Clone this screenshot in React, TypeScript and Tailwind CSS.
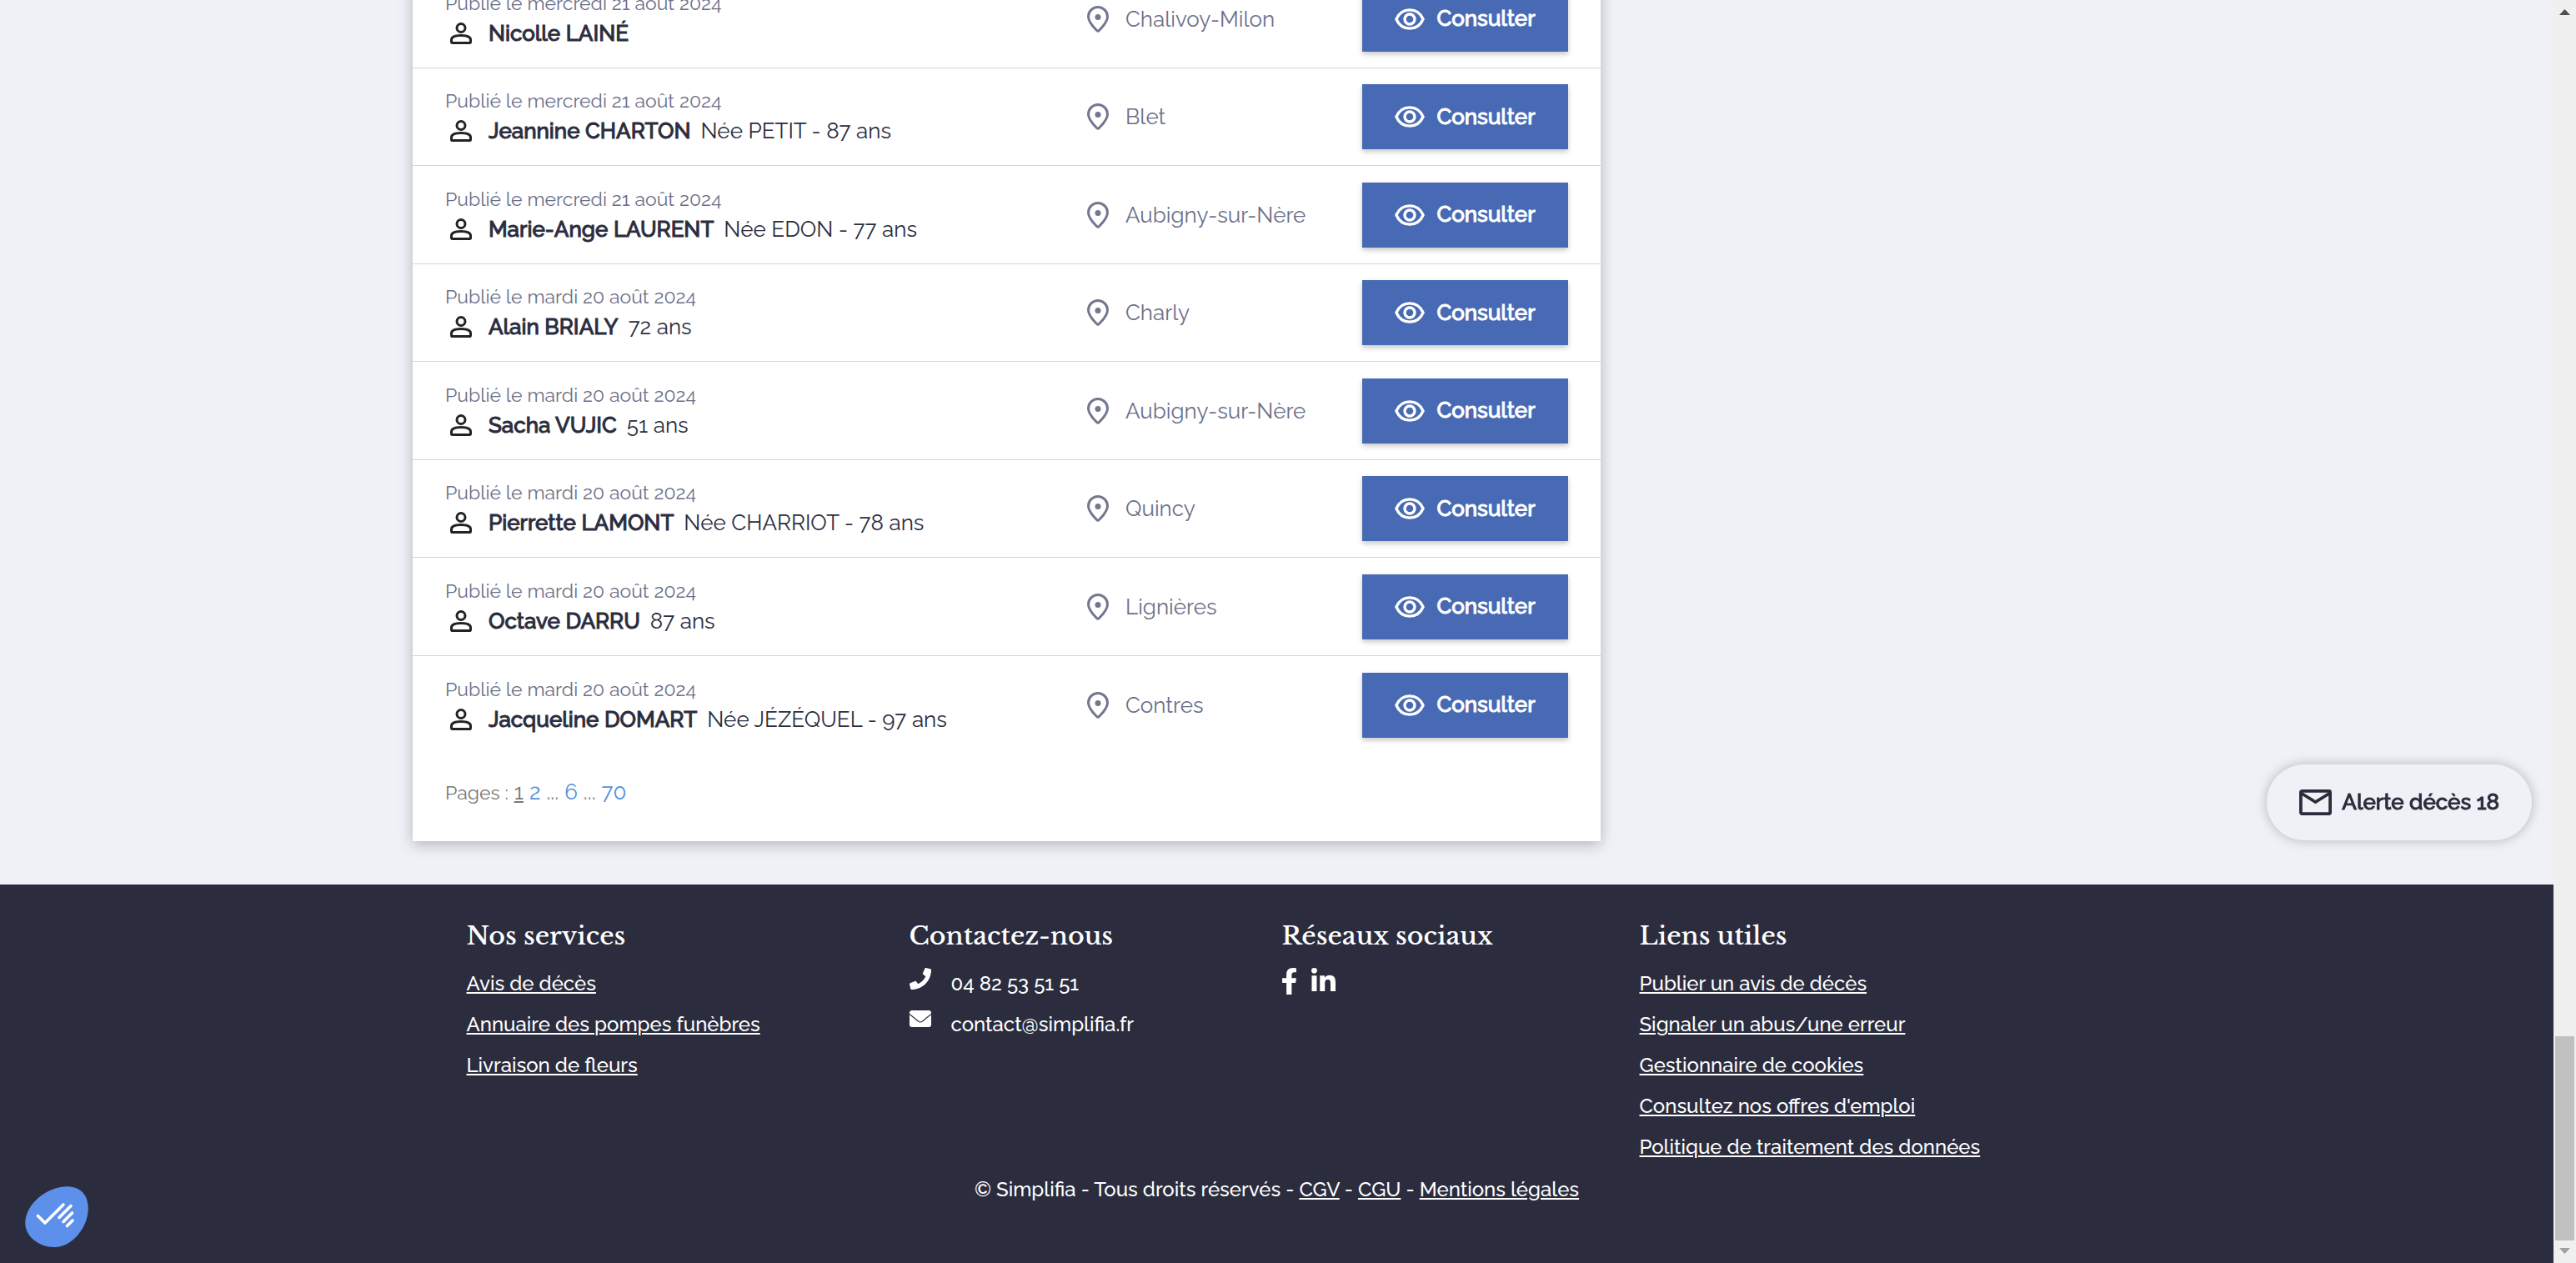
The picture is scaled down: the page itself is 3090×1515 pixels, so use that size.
import type { ReactNode } from 'react';

type Notice = { date: string; name: string; detail?: string; city: string };

const notices: Notice[] = [
  { date: 'mercredi 21 août 2024', name: 'Nicolle LAINÉ', city: 'Chalivoy-Milon' },
  { date: 'mercredi 21 août 2024', name: 'Jeannine CHARTON', detail: 'Née PETIT - 87 ans', city: 'Blet' },
  { date: 'mercredi 21 août 2024', name: 'Marie-Ange LAURENT', detail: 'Née EDON - 77 ans', city: 'Aubigny-sur-Nère' },
  { date: 'mardi 20 août 2024', name: 'Alain BRIALY', detail: '72 ans', city: 'Charly' },
  { date: 'mardi 20 août 2024', name: 'Sacha VUJIC', detail: '51 ans', city: 'Aubigny-sur-Nère' },
  { date: 'mardi 20 août 2024', name: 'Pierrette LAMONT', detail: 'Née CHARRIOT - 78 ans', city: 'Quincy' },
  { date: 'mardi 20 août 2024', name: 'Octave DARRU', detail: '87 ans', city: 'Lignières' },
  { date: 'mardi 20 août 2024', name: 'Jacqueline DOMART', detail: 'Née JÉZÉQUEL - 97 ans', city: 'Contres' },
];

const services = ['Avis de décès', 'Annuaire des pompes funèbres', 'Livraison de fleurs'];
const usefulLinks = [
  'Publier un avis de décès',
  'Signaler un abus/une erreur',
  'Gestionnaire de cookies',
  "Consultez nos offres d'emploi",
  'Politique de traitement des données',
];

function PersonIcon() {
  return (
    <svg className="ml-1.5 h-[26px] w-[26px] shrink-0" viewBox="0 0 26 26" fill="none" stroke="#232323" strokeWidth="3" aria-hidden="true">
      <circle cx="13" cy="6.5" r="5" />
      <path d="M1.500 23.200v-2.400c0-3.600 5.200-5.300 11.500-5.300s11.500 1.700 11.500 5.300v2.400a1.300 1.300 0 0 1-1.300 1.300H2.800a1.300 1.300 0 0 1-1.300-1.300z" />
    </svg>
  );
}

function PinIcon() {
  return (
    <svg className="h-8 w-[26px] shrink-0" viewBox="0 0 26 32" fill="none" aria-hidden="true">
      <path d="M13 1.500C6.600 1.500 1.500 6.600 1.500 13c0 7 6.500 12.600 10.400 16.800.6.700 1.600.7 2.200 0C18 25.600 24.500 20 24.500 13 24.500 6.600 19.400 1.500 13 1.500z" stroke="#73778f" strokeWidth="3" />
      <circle cx="13" cy="13.500" r="3.500" fill="#73778f" />
    </svg>
  );
}

function EyeIcon() {
  return (
    <svg className="h-[26px] w-9 shrink-0" viewBox="0 0 36 26" fill="none" stroke="currentColor" strokeWidth="3.400" aria-hidden="true">
      <path d="M1.900 13C5 6 11 1.900 18 1.900S31 6 34.100 13C31 20 25 24.100 18 24.100S5 20 1.900 13z" strokeLinejoin="round" />
      <circle cx="18" cy="13" r="6" />
    </svg>
  );
}

function Row({ notice }: { notice: Notice }) {
  return (
    <li className="flex items-center border-b border-[#d3d5df] px-[39px] last:border-b-0">
      <div className="min-w-0 flex-1 pb-0.5">
        <p className="text-[23px] leading-9 text-[#6c7089]">Publié le {notice.date}</p>
        <p className="flex items-center text-[26px] leading-9 text-[#2b2d3e]">
          <PersonIcon />
          <strong className="ml-5 font-medium [-webkit-text-stroke:1px_currentColor]">{notice.name}</strong>
          {notice.detail && <span className="ml-3">{notice.detail}</span>}
        </p>
      </div>
      <p className="flex w-[330px] items-center gap-5 text-[26px] leading-9 text-[#6c7089]">
        <PinIcon />
        {notice.city}
      </p>
      <button type="button" className="flex h-[78px] w-[247px] items-center justify-center gap-3.5 bg-[#4869b3] text-[26px] font-medium text-white shadow-[0_3px_6px_rgba(0,0,0,0.22)] [-webkit-text-stroke:1px_currentColor]">
        <EyeIcon />
        Consulter
      </button>
    </li>
  );
}

function FooterLink({ children }: { children: ReactNode }) {
  return (
    <a href="#" className="underline decoration-2 underline-offset-2">
      {children}
    </a>
  );
}

function FooterColumn({ title, children }: { title: string; children: ReactNode }) {
  return (
    <section>
      <h2 className="font-['Libre_Baskerville','Liberation_Serif',serif] text-[30px] leading-10 font-medium">{title}</h2>
      {children}
    </section>
  );
}

function Footer() {
  return (
    <footer className="flex-1 bg-[#2b2d3e] text-[24px] font-medium text-white">
      <div className="mx-auto grid max-w-[1944px] grid-cols-[531fr_447fr_429fr_537fr] pt-[42px]">
        <FooterColumn title="Nos services">
          <ul className="mt-3 leading-[49px]">
            {services.map((s) => (
              <li key={s}><FooterLink>{s}</FooterLink></li>
            ))}
          </ul>
        </FooterColumn>
        <FooterColumn title="Contactez-nous">
          <ul className="mt-3 leading-[49px]">
            <li className="flex">
              <svg className="mt-1.5 mr-6 h-[26px] w-[26px]" viewBox="0 0 512 512" fill="currentColor" aria-hidden="true">
                <path d="M493.400 24.600l-104-24c-11.300-2.600-22.900 3.300-27.500 13.900l-48 112c-4.200 9.800-1.400 21.300 6.900 28l60.600 49.600c-36 76.700-98.900 140.500-177.200 177.200l-49.600-60.600c-6.800-8.300-18.200-11.100-28-6.900l-112 48C3.900 366.500-2 378.100.6 389.400l24 104C27.100 504.200 36.700 512 48 512c256.100 0 464-207.500 464-464 0-11.200-7.700-20.900-18.600-23.400z" />
              </svg>
              04 82 53 51 51
            </li>
            <li className="flex">
              <svg className="mt-2 mr-6 h-5 w-[26px]" viewBox="0 0 26 20" aria-hidden="true">
                <rect width="26" height="20" rx="3" fill="currentColor" />
                <path d="M0 4.500l10.500 8.500q2.500 2 5 0L26 4.500" fill="none" stroke="#2b2d3e" strokeWidth="1.200" />
              </svg>
              contact@simplifia.fr
            </li>
          </ul>
        </FooterColumn>
        <FooterColumn title="Réseaux sociaux">
          <div className="mt-[18px] flex gap-[18px]">
            <a href="#" aria-label="Facebook">
              <svg className="h-8 w-[17px]" viewBox="22 0 272 512" preserveAspectRatio="none" fill="currentColor" aria-hidden="true">
                <path d="M279.140 288l14.220-92.660h-88.910v-60.130c0-25.350 12.420-50.060 52.240-50.060h40.420V6.260S260.430 0 225.360 0c-73.220 0-121.080 44.380-121.080 124.720v70.620H22.890V288h81.390v224h100.170V288z" />
              </svg>
            </a>
            <a href="#" aria-label="LinkedIn">
              <svg className="h-[28px] w-[29px]" viewBox="0 0 448 448" preserveAspectRatio="none" fill="currentColor" aria-hidden="true">
                <path d="M100.280 448H7.400V148.900h92.880zM53.790 108.100C24.090 108.100 0 83.500 0 53.800a53.790 53.790 0 0 1 107.580 0c0 29.700-24.100 54.300-53.790 54.300zM447.900 448h-92.680V302.400c0-34.700-.7-79.200-48.290-79.200-48.290 0-55.690 37.700-55.690 76.700V448h-92.780V148.900h89.080v40.800h1.300c12.400-23.500 42.690-48.300 87.880-48.300 94 0 111.280 61.900 111.280 142.300V448z" />
              </svg>
            </a>
          </div>
        </FooterColumn>
        <FooterColumn title="Liens utiles">
          <ul className="mt-3 leading-[49px]">
            {usefulLinks.map((s) => (
              <li key={s}><FooterLink>{s}</FooterLink></li>
            ))}
          </ul>
        </FooterColumn>
      </div>
      <p className="mt-0.5 text-center leading-[49px]">
        © Simplifia - Tous droits réservés - <FooterLink>CGV</FooterLink> - <FooterLink>CGU</FooterLink> -{' '}
        <FooterLink>Mentions légales</FooterLink>
      </p>
    </footer>
  );
}

function ScrollBar() {
  return (
    <div className="flex w-[27px] shrink-0 flex-col items-center bg-[#f0f0f0]" aria-hidden="true">
      <svg className="mt-[11px] h-[7px] w-[13px]" viewBox="0 0 13 7" fill="#505050"><path d="M6.500 0L13 7H0z" /></svg>
      <div className="flex-1" />
      <div className="h-[245px] w-[23px] bg-[#c0c0c0]" />
      <svg className="mt-[9px] mb-[11px] h-[7px] w-[13px]" viewBox="0 0 13 7" fill="#a0a0a0"><path d="M6.500 7L0 0h13z" /></svg>
    </div>
  );
}

export default function App() {
  return (
    <div className="flex h-screen overflow-hidden bg-[#f0f1f6] font-['Raleway','Lato',sans-serif]">
      <div className="flex min-w-0 flex-1 flex-col">
        <main className="mx-auto w-full max-w-[2073px] pb-[52px]">
          <div className="-mt-9 max-w-[1425px] bg-white shadow-[0_4px_16px_rgba(0,0,0,0.25)]">
            <ul className="grid grid-rows-[118px_117px_118px_117px_118px_117px_118px_117px]">
              {notices.map((n) => (
                <Row key={n.name} notice={n} />
              ))}
            </ul>
            <nav aria-label="Pages" className="flex items-baseline gap-[7px] px-[39px] pt-7 pb-10 text-[26px] leading-9 text-[#777777]">
              <span className="text-[23px]">Pages :</span>
              <a href="#" aria-current="page" className="underline decoration-2 underline-offset-2">1</a>
              <a href="#" className="text-[#5590e0]">2</a>
              <span>...</span>
              <a href="#" className="text-[#5590e0]">6</a>
              <span>...</span>
              <a href="#" className="text-[#5590e0]">70</a>
            </nav>
          </div>
        </main>
        <Footer />
      </div>
      <ScrollBar />
      <button type="button" className="fixed right-[53px] bottom-[507px] flex h-[91px] items-center gap-3 rounded-full bg-[#f0f1f6] px-[39px] text-[26px] font-medium text-[#2b2d3e] shadow-[0_0_14px_rgba(0,0,0,0.25)] [-webkit-text-stroke:1px_currentColor]">
        <svg className="h-[31px] w-[39px]" viewBox="0 0 39 31" fill="none" stroke="currentColor" strokeWidth="3.800" aria-hidden="true">
          <rect x="1.900" y="1.900" width="35.200" height="27.200" rx="1.500" />
          <path d="M2.500 4.500l17 10.500 17-10.500" />
        </svg>
        Alerte décès 18
      </button>
      <button type="button" aria-label="Préférences de cookies" className="fixed bottom-[18px] left-[30px]">
        <svg className="h-[74px] w-[76px]" viewBox="0 0 76 74" aria-hidden="true">
          <path d="M50 .3C66 .3 76 10 75.800 27 75.500 49 57 73 35 73 17 73 0 60 .3 44 .6 20 28 .3 50 .3z" fill="#5c90ea" />
          <path d="M15.500 35.500l8.500 8.500 22-22M55 23.500L41 37.500M56.500 32L46 42.500M57 41l-6.500 6.500" fill="none" stroke="#fff" strokeWidth="3.600" strokeLinecap="round" strokeLinejoin="round" />
        </svg>
      </button>
    </div>
  );
}
